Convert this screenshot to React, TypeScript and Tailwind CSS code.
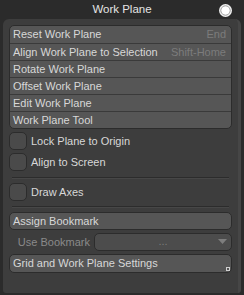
export default function App() {
  const rows = [
    { label: 'Reset Work Plane', key: 'End' },
    { label: 'Align Work Plane to Selection', key: 'Shift-Home' },
    { label: 'Rotate Work Plane', key: '' },
    { label: 'Offset Work Plane', key: '' },
    { label: 'Edit Work Plane', key: '' },
    { label: 'Work Plane Tool', key: '' },
  ];

  return (
    <div
      className="w-[244px] h-[295px] bg-[#2b2b2b] text-[11px] text-[#d8d8d8] flex flex-col overflow-hidden whitespace-nowrap"
      style={{ fontFamily: '"Liberation Sans", Arial, sans-serif' }}
    >
      {/* header */}
      <div className="h-[19px] flex items-center relative shrink-0">
        <div className="flex-1 text-center text-[11.5px] text-[#e4e4e4] leading-none pt-[1px]">Work Plane</div>
        <svg className="absolute left-[218px] top-[3px]" width="15" height="15" viewBox="0 0 15 15">
          <circle cx="7.5" cy="7.5" r="6.5" fill="#f2f2f2" />
          <circle cx="7.5" cy="7.5" r="4.6" fill="none" stroke="#8a8a8a" strokeWidth="1" />
          <circle cx="7.5" cy="7.5" r="4" fill="#ffffff" />
        </svg>
      </div>

      {/* panel */}
      <div className="ml-[3px] w-[238px] h-[274px] bg-[#3d3d3d] rounded-t-[6px] rounded-b-[3px] border-r-[3px] border-[#464646] pl-[6px] pr-[6px] pt-[6px] flex flex-col">
        <div className="rounded-[5px] border border-[#2c2c2c] bg-[#565656] overflow-hidden">
          {rows.map((r, i) => (
            <div
              key={r.label}
              className={`h-[17px] flex items-center justify-between pl-[3px] pr-[5px] ${i > 0 ? 'border-t border-[#3a3a3a]' : ''}`}
            >
              <span>{r.label}</span>
              <span className="text-[#7c7c7c]">{r.key}</span>
            </div>
          ))}
        </div>

        <div className="mt-[3px] flex flex-col gap-[3px]">
          <label className="flex items-center gap-[4px] h-[18px]">
            <span className="w-[18px] h-[18px] rounded-[5px] bg-[#4a4a4a] border border-[#2c2c2c]" />
            <span>Lock Plane to Origin</span>
          </label>
          <label className="flex items-center gap-[4px] h-[18px]">
            <span className="w-[18px] h-[18px] rounded-[5px] bg-[#4a4a4a] border border-[#2c2c2c]" />
            <span>Align to Screen</span>
          </label>
        </div>

        <div className="mt-[6px] mx-[3px] h-[2px] border-t border-[#2c2c2c] border-b border-b-[#474747]" />

        <label className="mt-[4px] flex items-center gap-[4px] h-[18px]">
          <span className="w-[18px] h-[18px] rounded-[5px] bg-[#4a4a4a] border border-[#2c2c2c]" />
          <span>Draw Axes</span>
        </label>

        <div className="mt-[5px] mx-[3px] h-[2px] border-t border-[#2c2c2c] border-b border-b-[#474747]" />

        <div className="mt-[4px] h-[18px] rounded-[5px] border border-[#2c2c2c] bg-[#565656] flex items-center pl-[3px]">
          Assign Bookmark
        </div>

        <div className="mt-[3px] h-[18px] flex items-center">
          <span className="w-[85px] text-right pr-[4px] text-[#8a8a8a]">Use Bookmark</span>
          <div className="flex-1 h-[18px] rounded-[5px] border border-[#2c2c2c] bg-[#4c4c4c] flex items-center relative">
            <span className="flex-1 text-center text-[#7a7a7a] leading-none pb-[2px]">...</span>
            <svg className="absolute right-[4px] top-[5px]" width="9" height="6" viewBox="0 0 9 6">
              <path d="M0 0 L9 0 L4.5 5 Z" fill="#7e7e7e" />
            </svg>
          </div>
        </div>

        <div className="mt-[3px] h-[19px] rounded-[5px] border border-[#2c2c2c] bg-[#565656] flex items-center pl-[3px] relative">
          Grid and Work Plane Settings
          <span className="absolute right-[1px] bottom-[1px] w-[4px] h-[4px] border border-[#cfcfcf]" />
        </div>
      </div>
    </div>
  );
}
